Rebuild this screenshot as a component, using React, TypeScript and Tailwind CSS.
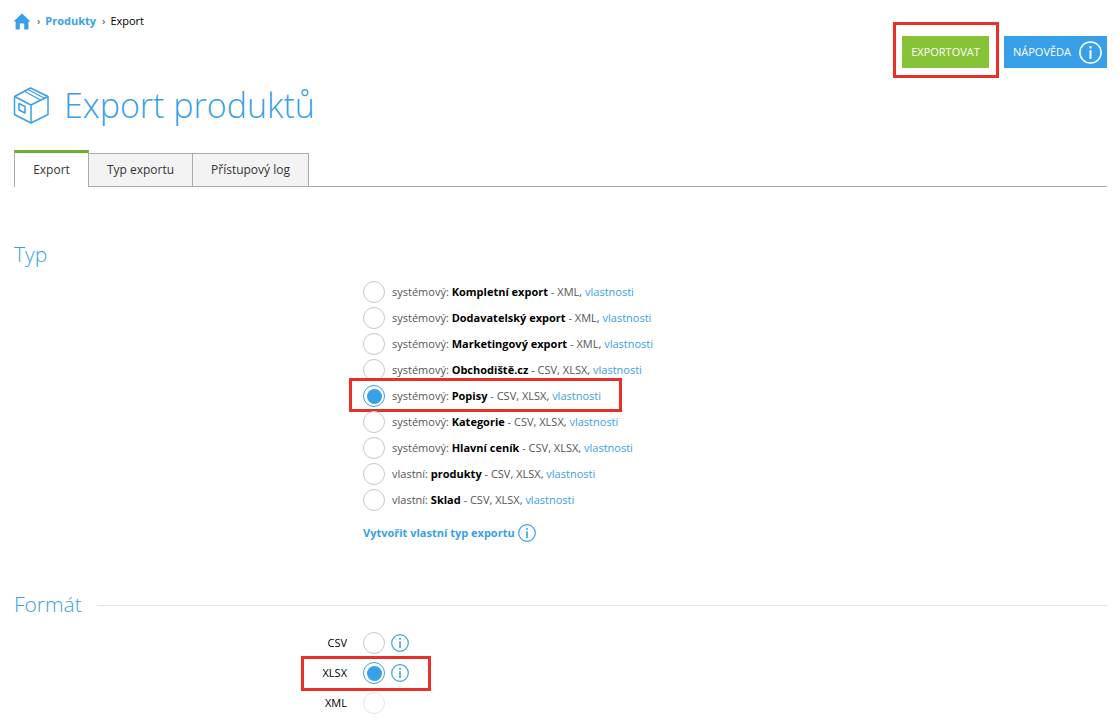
import React from "react";

const types = [
  { kind: "systémový", name: "Kompletní export", formats: "XML" },
  { kind: "systémový", name: "Dodavatelský export", formats: "XML" },
  { kind: "systémový", name: "Marketingový export", formats: "XML" },
  { kind: "systémový", name: "Obchodiště.cz", formats: "CSV, XLSX" },
  { kind: "systémový", name: "Popisy", formats: "CSV, XLSX", checked: true, marked: true },
  { kind: "systémový", name: "Kategorie", formats: "CSV, XLSX" },
  { kind: "systémový", name: "Hlavní ceník", formats: "CSV, XLSX" },
  { kind: "vlastní", name: "produkty", formats: "CSV, XLSX" },
  { kind: "vlastní", name: "Sklad", formats: "CSV, XLSX" },
];

const Info = ({ size = 18, stroke = "#38a0e8" }: { size?: number; stroke?: string }) => (
  <svg width={size} height={size} viewBox="0 0 18 18" fill="none" className="shrink-0">
    <circle cx="9" cy="9" r="8.3" stroke={stroke} strokeWidth="1.2" />
    <rect x="8.2" y="7.2" width="1.6" height="6.8" fill={stroke} />
    <rect x="8.2" y="4" width="1.6" height="1.8" fill={stroke} />
  </svg>
);

const Radio = ({ checked = false, faded = false }: { checked?: boolean; faded?: boolean }) =>
  checked ? (
    <span className="flex h-[22px] w-[22px] shrink-0 items-center justify-center rounded-full border-[1.5px] border-[#38a0e8] bg-white">
      <span className="h-[15px] w-[15px] rounded-full bg-[#38a0e8]" />
    </span>
  ) : (
    <span className={`h-[22px] w-[22px] shrink-0 rounded-full border bg-white ${faded ? "border-[#e6e6e6]" : "border-[#c8c8c8]"}`} />
  );

const Mark = ({ className }: { className: string }) => (
  <span className={`pointer-events-none absolute border-[3px] border-[#e8302a] ${className}`} />
);

export default function App() {
  return (
    <div className="relative h-[725px] w-[1120px] overflow-hidden bg-white pl-[14px] pr-[13px] font-['Open_Sans',sans-serif] text-[12px] text-[#222]">
      {/* top row */}
      <div className="flex h-[68px] items-start justify-between">
        <div className="flex items-center pt-[12px] text-[11px] leading-[18px]">
          <svg width="18" height="17" viewBox="0 0 18 17" className="mr-[5px] -translate-x-[1px]">
            <path d="M9 0.5 L17.6 8.6 L15.4 8.6 L15.4 16.5 L11.2 16.5 L11.2 10.6 L6.8 10.6 L6.8 16.5 L2.6 16.5 L2.6 8.6 L0.4 8.6 Z" fill="#38a0e8" />
          </svg>
          <span className="mr-[5px] text-[#444]">›</span>
          <span className="mr-[6px] font-bold text-[#38a0e8]">Produkty</span>
          <span className="mr-[5px] text-[#444]">›</span>
          <span className="text-black">Export</span>
        </div>
        <div className="mt-[36px] flex gap-[15px]">
          <button className="flex h-[32px] w-[87px] items-center justify-center bg-[#87c337] text-[11px] text-white">EXPORTOVAT</button>
          <button className="flex h-[32px] w-[103px] items-center gap-[8px] bg-[#38a0e8] pl-[9px] text-[11px] text-white">
            NÁPOVĚDA
            <Info size={23} stroke="#ffffff" />
          </button>
        </div>
      </div>

      {/* title */}
      <div className="mt-[15px] flex h-[44px] items-center">
        <svg width="36" height="37" viewBox="0 0 36 37" fill="none" stroke="#38a0e8" strokeWidth="1.5" strokeLinejoin="round" className="shrink-0 -translate-x-[1px]">
          <path d="M17.5 1 L35 9.5 L35 27.5 L18 36 L1.5 27.5 L1.5 9.5 Z" />
          <path d="M1.5 9.5 L18 18 L35 9.5 M18 18 L18 36" />
          <path d="M11 4 L27.5 13 M15 2.5 L31 11" strokeWidth="1.2" />
          <path d="M6 16.5 L12 19.5 L12 26 L6 23 Z" />
        </svg>
        <h1 className="ml-[14px] text-[34px] leading-[44px] font-light text-[#38a0e8]">Export produktů</h1>
      </div>

      {/* tabs */}
      <div className="mt-[23px] flex h-[37px] items-end border-b border-[#aaa]">
        <div className="relative z-10 -mb-px flex h-[37px] w-[75px] items-center justify-center border-x border-[#aaa] border-t-[3px] border-t-[#6fae2e] bg-white text-[#333]">Export</div>
        <div className="flex h-[33px] w-[104px] items-center justify-center border-t border-r border-[#aaa] bg-[#f3f3f3] text-[#333]">Typ exportu</div>
        <div className="flex h-[33px] w-[116px] items-center justify-center border-t border-r border-[#aaa] bg-[#f3f3f3] text-[#333]">Přístupový log</div>
      </div>

      {/* typ */}
      <h2 className="mt-[52px] text-[21px] leading-[30px] font-light text-[#38a0e8]">Typ</h2>
      <div className="mt-[10px] flex flex-col pl-[349px]">
        {types.map((t) => (
          <div key={t.name} className="relative flex h-[26px] items-center gap-[7px] text-[11px]">
            <Radio checked={t.checked} />
            <span className="text-[#555]">
              {t.kind}: <b className="text-black">{t.name}</b> - {t.formats},{" "}
              <span className="text-[#38a0e8]">vlastnosti</span>
            </span>
            {t.marked && <Mark className="-top-[5px] -left-[14px] h-[34px] w-[273px]" />}
          </div>
        ))}
        <div className="mt-[11px] flex items-center gap-[3px] text-[11px] font-bold text-[#38a0e8]">
          Vytvořit vlastní typ exportu
          <Info />
        </div>
      </div>

      {/* format */}
      <div className="mt-[47px] flex items-center gap-[15px]">
        <h2 className="text-[21px] leading-[30px] font-light text-[#38a0e8]">Formát</h2>
        <div className="mt-[2px] h-px flex-1 bg-[#e2e2e2]" />
      </div>
      <div className="mt-[9px] flex flex-col">
        {["CSV", "XLSX", "XML"].map((f) => (
          <div key={f} className="relative flex h-[30px] items-center text-[11px]">
            <span className="w-[333px] text-right text-black">{f}</span>
            <span className="ml-[16px] flex"><Radio checked={f === "XLSX"} faded={f === "XML"} /></span>
            {f !== "XML" && <span className="ml-[6px] flex"><Info /></span>}
            {f === "XLSX" && <Mark className="-top-[2px] left-[287px] h-[35px] w-[130px]" />}
          </div>
        ))}
      </div>

      <Mark className="top-[22px] left-[893px] h-[56px] w-[106px]" />
    </div>
  );
}
